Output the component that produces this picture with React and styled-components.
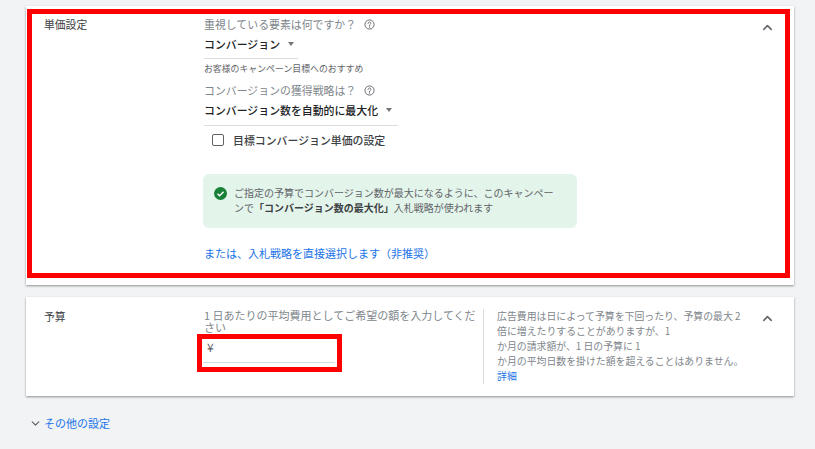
import React from "react";
import styled, { createGlobalStyle } from "styled-components";
import { ChevronUp, ChevronDown } from "lucide-react";

const Global = createGlobalStyle`
  html, body { margin: 0; padding: 0; background: #f1f3f4; }
  body { width: 815px; height: 449px; overflow: hidden; font-family: "Noto Sans CJK JP", "Noto Sans", sans-serif; color: #3c4043; }
`;

const Page = styled.div`
  display: flex;
  flex-direction: column;
  padding: 6px 21px 0 26px;
  width: 768px;
`;

const Card = styled.section`
  position: relative;
  display: flex;
  background: #fff;
  height: ${p => p.$height}px;
  margin-bottom: ${p => p.$gap}px;
  padding: ${p => p.$top}px 0 0 18px;
  box-sizing: border-box;
  box-shadow: 0 1px 2px rgba(60, 64, 67, 0.55);
`;

const Title = styled.div`
  width: 160px;
  flex: none;
  font-size: 10.8px;
  line-height: 14px;
  color: #3c4043;
`;

const Body = styled.div`
  width: 276px;
  flex: none;
  display: flex;
  flex-direction: column;
  align-items: flex-start;
`;

const WideBody = styled(Body)`
  width: 560px;
`;

const Question = styled.div`
  display: flex;
  align-items: center;
  gap: 8px;
  height: 14px;
  font-size: 10.9px;
  color: #80868b;
  margin-top: ${p => p.$mt || 0}px;
`;

const HelpIcon = () => (
  <svg width="11" height="11" viewBox="0 0 24 24" fill="none" stroke="#5f6368" strokeWidth="2">
    <circle cx="12" cy="12" r="10" />
    <path d="M9 9.5a3 3 0 1 1 4.6 2.5c-1 .7-1.6 1.2-1.6 2.5" strokeLinecap="round" />
    <circle cx="12" cy="17.5" r="0.6" fill="#5f6368" />
  </svg>
);

const Select = styled.div`
  display: flex;
  align-items: center;
  gap: 7px;
  height: 18px;
  margin-top: ${p => p.$mt}px;
  font-size: 10.9px;
  font-weight: 500;
  color: #202124;
`;

const Caret = styled.span`
  width: 0;
  height: 0;
  border-left: 3.5px solid transparent;
  border-right: 3.5px solid transparent;
  border-top: 4px solid #757575;
  margin-left: 1px;
`;

const Rule = styled.div`
  width: ${p => p.$w}px;
  height: 1px;
  background: #dadce0;
  margin-top: ${p => p.$mt}px;
`;

const Hint = styled.div`
  font-size: 8.9px;
  line-height: 12px;
  margin-top: 4px;
  color: #5f6368;
`;

const CheckRow = styled.label`
  display: flex;
  align-items: center;
  gap: 9px;
  margin: 7px 0 0 8px;
  height: 14px;
  font-size: 10.9px;
  font-weight: 500;
  color: #3c4043;
`;

const CheckBox = styled.span`
  width: 10px;
  height: 10px;
  border: 1.5px solid #5f6368;
  border-radius: 2px;
`;

const Notice = styled.div`
  display: flex;
  gap: 7px;
  width: 374px;
  height: 54px;
  box-sizing: border-box;
  margin: 27px 0 0 -1px;
  padding: 11px 20px 0 11px;
  background: #e3f4ea;
  border-radius: 6px;
  font-size: 10px;
  line-height: 15px;
  color: #5f6368;
`;

const NoticeText = styled.div`
  width: 324px;
  b { font-weight: 700; color: #3c4043; }
`;

const CheckIcon = () => (
  <svg width="13" height="13" viewBox="0 0 24 24" style={{ flex: "none", marginTop: 2 }}>
    <circle cx="12" cy="12" r="12" fill="#188038" />
    <path d="M6.5 12.5l3.8 3.8 7.4-7.6" fill="none" stroke="#fff" strokeWidth="2.6" />
  </svg>
);

const BlueLink = styled.a`
  color: #1a73e8;
  font-size: ${p => p.$size || 11}px;
  line-height: ${p => p.$lh || 14}px;
  margin-top: ${p => p.$mt || 0}px;
  display: block;
`;

const Toggle = styled.button`
  position: absolute;
  top: ${p => p.$top}px;
  right: 18px;
  width: 18px;
  height: 18px;
  border: 0;
  padding: 0;
  background: none;
  color: #5f6368;
  display: flex;
  align-items: center;
  justify-content: center;
`;

const Prompt = styled.div`
  font-size: 11px;
  line-height: 12px;
  color: #80868b;
  width: 276px;
`;

const Amount = styled.div`
  width: 132px;
  height: 28px;
  box-sizing: border-box;
  margin-top: 2px;
  margin-left: -1px;
  padding: 5px 0 0 4px;
  font-size: 12px;
  line-height: 14px;
  color: #5f6368;
  border-bottom: 1px solid #dadce0;
`;

const Help = styled.aside`
  flex: none;
  width: 250px;
  height: 75px;
  margin-left: 3px;
  padding-left: 13px;
  border-left: 1px solid #dadce0;
  font-size: 9.9px;
  line-height: 15px;
  color: #80868b;
  white-space: nowrap;
`;

const Marker = styled.div`
  position: absolute;
  left: ${p => p.$l}px;
  top: ${p => p.$t}px;
  width: ${p => p.$w}px;
  height: ${p => p.$h}px;
  box-sizing: border-box;
  border: 5px solid #ff0000;
  pointer-events: none;
`;

const More = styled.div`
  display: flex;
  align-items: center;
  gap: 2px;
  margin: 0 0 0 3px;
  height: 14px;
  color: #5f6368;
`;

export default function App() {
  return (
    <>
      <Global />
      <Page>
        <Card $height={279} $gap={12} $top={11}>
          <Title>単価設定</Title>
          <WideBody>
            <Question>重視している要素は何ですか？<HelpIcon /></Question>
            <Select $mt={4}>コンバージョン<Caret /></Select>
            <Rule $w={94} $mt={5} />
            <Hint>お客様のキャンペーン目標へのおすすめ</Hint>
            <Question $mt={8}>コンバージョンの獲得戦略は？<HelpIcon /></Question>
            <Select $mt={4}>コンバージョン数を自動的に最大化<Caret /></Select>
            <Rule $w={194} $mt={6} />
            <CheckRow><CheckBox />目標コンバージョン単価の設定</CheckRow>
            <Notice>
              <CheckIcon />
              <NoticeText>ご指定の予算でコンバージョン数が最大になるように、このキャンペーンで<b>「コンバージョン数の最大化」</b>入札戦略が使われます</NoticeText>
            </Notice>
            <BlueLink $mt={18}>または、入札戦略を直接選択します（非推奨）</BlueLink>
          </WideBody>
          <Toggle $top={12}><ChevronUp size={15} strokeWidth={2.4} /></Toggle>
          <Marker $l={1} $t={3} $w={763} $h={269} />
        </Card>
        <Card $height={99} $gap={20} $top={12}>
          <Title>予算</Title>
          <Body>
            <Prompt>1 日あたりの平均費用としてご希望の額を入力してください</Prompt>
            <Amount>¥</Amount>
          </Body>
          <Help>
            広告費用は日によって予算を下回ったり、予算の最大 2<br />
            倍に増えたりすることがありますが、1<br />
            か月の請求額が、1 日の予算に 1<br />
            か月の平均日数を掛けた額を超えることはありません。<br />
            <BlueLink as="span" $size={9.9} $lh={15}>詳細</BlueLink>
          </Help>
          <Toggle $top={12}><ChevronUp size={15} strokeWidth={2.4} /></Toggle>
          <Marker $l={171} $t={37} $w={145} $h={38} />
        </Card>
        <More>
          <ChevronDown size={13} strokeWidth={2.2} />
          <BlueLink>その他の設定</BlueLink>
        </More>
      </Page>
    </>
  );
}
